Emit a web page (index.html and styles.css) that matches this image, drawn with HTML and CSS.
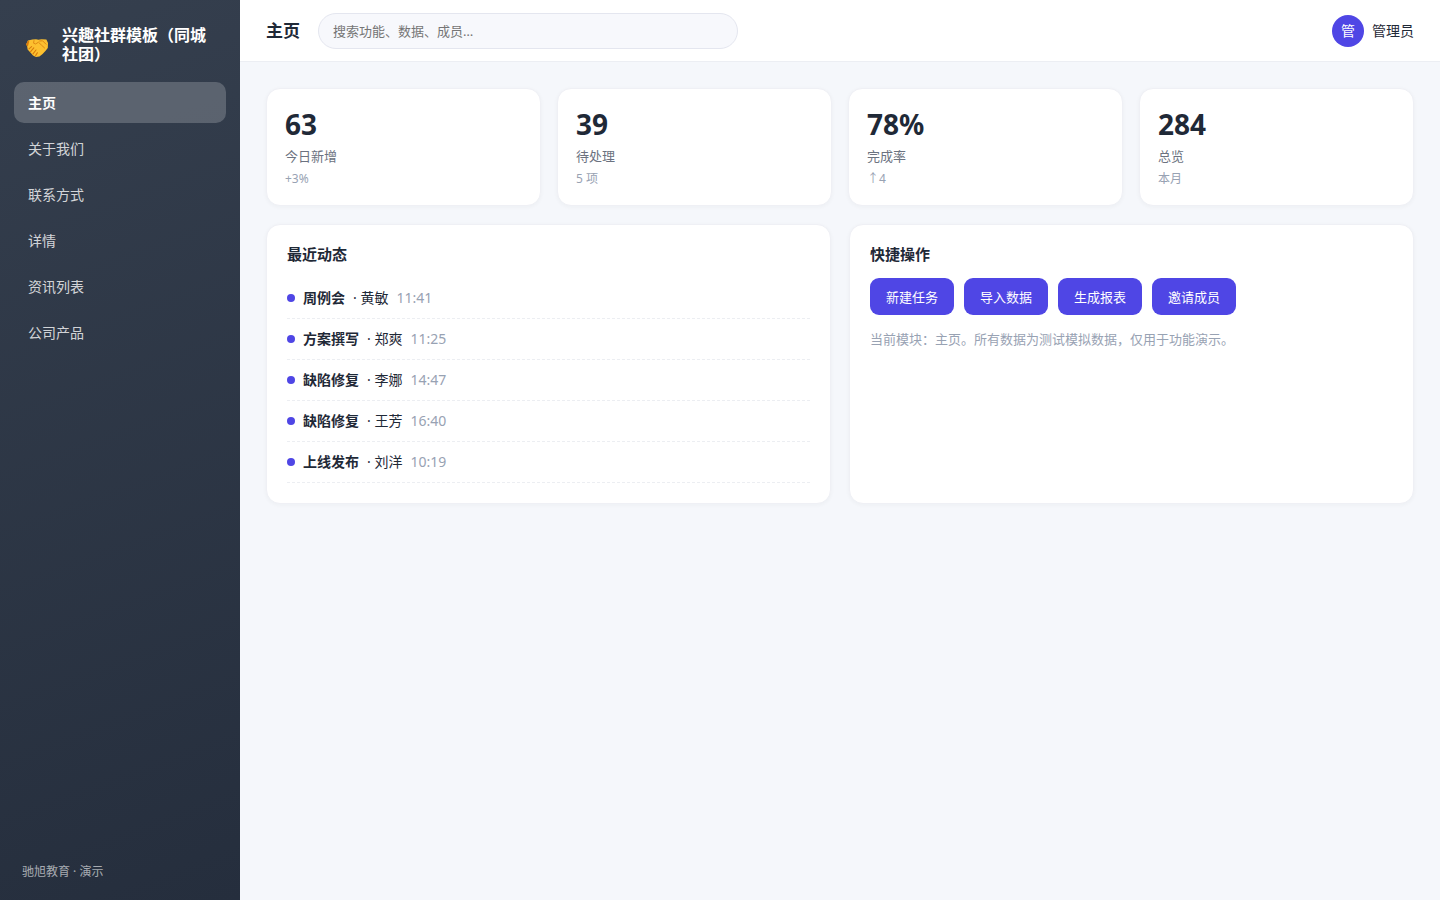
FILE: index.html
```html
<!DOCTYPE html>
<html lang="zh-CN">
<head>
  <meta charset="UTF-8" />
  <meta name="viewport" content="width=device-width, initial-scale=1.0" />
  <title>兴趣社群模板（同城社团）</title>
  <link rel="stylesheet" href="styles.css">
</head>
<body>

<div class="app">
  <aside class="sidebar">
    <div class="brand">
      <svg class="brand-icon" viewBox="0 0 28 28" aria-hidden="true">
        <path d="M2.2 13.2 4 9.4 8.4 8.6 12 8.2 14.4 8.8 17.6 8.2 22.4 8.6 24 12 23.8 17 21.4 20 18.6 23 15.4 25.6 12 26 9 24.4 6.4 21.6 3.6 18.4 3.2 15.6Z" fill="#fdc02f"/>
        <path d="M2.2 13.2 4 9.4 5.2 10.4 4.2 14.6 3.2 15.6Z" fill="#d87a0c"/>
        <path d="M10 9.6 9.6 12.2 11.6 13 14.4 11.2 17.4 14 20.6 17M15.6 10 18.6 9.8 22 13.2" fill="none" stroke="#e08a14" stroke-width="1" stroke-linecap="round" stroke-linejoin="round"/>
        <path d="M5 17.8 7.6 15.6M6.6 20.6 9.8 16.8M9 22.8 12 19M11.6 24.6 13.4 21.8" fill="none" stroke="#d87a0c" stroke-width="1.1" stroke-linecap="round"/>
      </svg>
      <span class="brand-name">兴趣社群模板（同城社团）</span>
    </div>

    <nav class="nav">
      <a class="nav-link active" href="#">主页</a>
      <a class="nav-link" href="#">关于我们</a>
      <a class="nav-link" href="#">联系方式</a>
      <a class="nav-link" href="#">详情</a>
      <a class="nav-link" href="#">资讯列表</a>
      <a class="nav-link" href="#">公司产品</a>
    </nav>

    <div class="sidebar-foot">驰旭教育 · 演示</div>
  </aside>

  <div class="main">
    <header class="topbar">
      <h1 class="page-title">主页</h1>
      <input class="search" type="search" placeholder="搜索功能、数据、成员…" aria-label="搜索" />
      <div class="user">
        <span class="avatar">管</span>
        <span>管理员</span>
      </div>
    </header>

    <main class="content">
      <section class="stats">
        <div class="stat">
          <div class="stat-num">63</div>
          <div class="stat-label">今日新增</div>
          <div class="stat-sub">+3%</div>
        </div>
        <div class="stat">
          <div class="stat-num">39</div>
          <div class="stat-label">待处理</div>
          <div class="stat-sub">5 项</div>
        </div>
        <div class="stat">
          <div class="stat-num">78%</div>
          <div class="stat-label">完成率</div>
          <div class="stat-sub">↑4</div>
        </div>
        <div class="stat">
          <div class="stat-num">284</div>
          <div class="stat-label">总览</div>
          <div class="stat-sub">本月</div>
        </div>
      </section>

      <div class="panels">
        <section class="panel">
          <h2 class="panel-title">最近动态</h2>
          <ul class="feed">
            <li><i class="dot"></i><b>周例会</b><span>· 黄敏</span><time>11:41</time></li>
            <li><i class="dot"></i><b>方案撰写</b><span>· 郑爽</span><time>11:25</time></li>
            <li><i class="dot"></i><b>缺陷修复</b><span>· 李娜</span><time>14:47</time></li>
            <li><i class="dot"></i><b>缺陷修复</b><span>· 王芳</span><time>16:40</time></li>
            <li><i class="dot"></i><b>上线发布</b><span>· 刘洋</span><time>10:19</time></li>
          </ul>
        </section>

        <section class="panel">
          <h2 class="panel-title">快捷操作</h2>
          <div class="actions">
            <button class="btn" type="button">新建任务</button>
            <button class="btn" type="button">导入数据</button>
            <button class="btn" type="button">生成报表</button>
            <button class="btn" type="button">邀请成员</button>
          </div>
          <p class="hint">当前模块：主页。所有数据为测试模拟数据，仅用于功能演示。</p>
        </section>
      </div>
    </main>
  </div>
</div>

</body>
</html>
```

FILE: styles.css
```css
* {
  box-sizing: border-box;
}

body {
  margin: 0;
  font-family: "Noto Sans", "Noto Sans CJK SC", sans-serif;
  font-size: 14px;
  line-height: 20px;
  color: #1f2937;
  background: #f5f7fb;
}

.app {
  display: flex;
  min-height: 100vh;
}

/* sidebar */
.sidebar {
  width: 240px;
  flex-shrink: 0;
  display: flex;
  flex-direction: column;
  padding: 26px 14px 18px;
  background: linear-gradient(160deg, #353f4e, #252e3d);
  color: #fff;
}

.brand {
  display: flex;
  align-items: center;
  gap: 10px;
  padding: 0 8px 0 10px;
  margin-bottom: 18px;
}

.brand-icon {
  width: 28px;
  height: 28px;
  flex-shrink: 0;
}

.brand-name {
  font-size: 16px;
  font-weight: 700;
  line-height: 19px;
}

.nav {
  display: flex;
  flex-direction: column;
  gap: 5px;
}

.nav-link {
  padding: 10px 14px;
  line-height: 21px;
  border-radius: 10px;
  color: rgba(255, 255, 255, 0.8);
  text-decoration: none;
}

.nav-link.active {
  background: rgba(255, 255, 255, 0.2);
  color: #fff;
  font-weight: 700;
}

.sidebar-foot {
  margin-top: auto;
  padding: 0 8px;
  font-size: 12px;
  color: rgba(255, 255, 255, 0.6);
}

/* top bar */
.main {
  flex: 1;
  min-width: 0;
}

.topbar {
  display: flex;
  align-items: center;
  gap: 18px;
  height: 62px;
  padding: 0 26px;
  background: #fff;
  border-bottom: 1px solid #eceef3;
}

.page-title {
  margin: 0;
  font-size: 17px;
  font-weight: 700;
}

.search {
  flex: 1;
  max-width: 420px;
  height: 36px;
  padding: 0 14px;
  border: 1px solid #e4e6ef;
  border-radius: 18px;
  background: #f7f8fc;
  font-family: inherit;
  font-size: 13px;
  outline: none;
  appearance: none;
}

.search::placeholder {
  color: #757575;
}

.user {
  display: flex;
  align-items: center;
  gap: 8px;
  margin-left: auto;
}

.avatar {
  display: flex;
  align-items: center;
  justify-content: center;
  width: 32px;
  height: 32px;
  border-radius: 50%;
  background: #4f46e5;
  color: #fff;
}

/* content */
.content {
  padding: 26px;
}

.stats {
  display: grid;
  grid-template-columns: repeat(4, 1fr);
  gap: 16px;
  margin-bottom: 18px;
}

.stat,
.panel {
  background: #fff;
  border: 1px solid #eff0f5;
  border-radius: 14px;
  box-shadow: 0 1px 4px rgba(31, 41, 55, 0.04);
}

.stat {
  padding: 18px;
}

.stat-num {
  font-size: 28px;
  font-weight: 700;
  line-height: 34px;
}

.stat-label {
  margin: 6px 0;
  font-size: 13px;
  line-height: 18px;
  color: #6b7280;
}

.stat-sub {
  font-size: 12px;
  line-height: 16px;
  color: #98a2b3;
}

.panels {
  display: grid;
  grid-template-columns: 1fr 1fr;
  gap: 18px;
}

.panel {
  padding: 20px;
}

.panel-title {
  margin: 0 0 14px;
  font-size: 15px;
  font-weight: 700;
  line-height: 19px;
}

.feed {
  margin: 0;
  padding: 0;
  list-style: none;
}

.feed li {
  display: flex;
  align-items: center;
  gap: 8px;
  padding: 9px 0;
  line-height: 22px;
  border-bottom: 1px dashed #eceef2;
}

.feed time {
  color: #98a2b3;
}

.dot {
  width: 8px;
  height: 8px;
  border-radius: 50%;
  background: #4f46e5;
}

.actions {
  display: flex;
  flex-wrap: wrap;
  gap: 10px;
}

.btn {
  height: 37px;
  padding: 0 16px;
  border: none;
  border-radius: 9px;
  background: #4f46e5;
  color: #fff;
  font-family: inherit;
  font-size: 13px;
  cursor: pointer;
}

.btn:hover {
  background: #4338ca;
}

.hint {
  margin: 14px 0 0;
  font-size: 13px;
  color: #98a2b3;
}
```
